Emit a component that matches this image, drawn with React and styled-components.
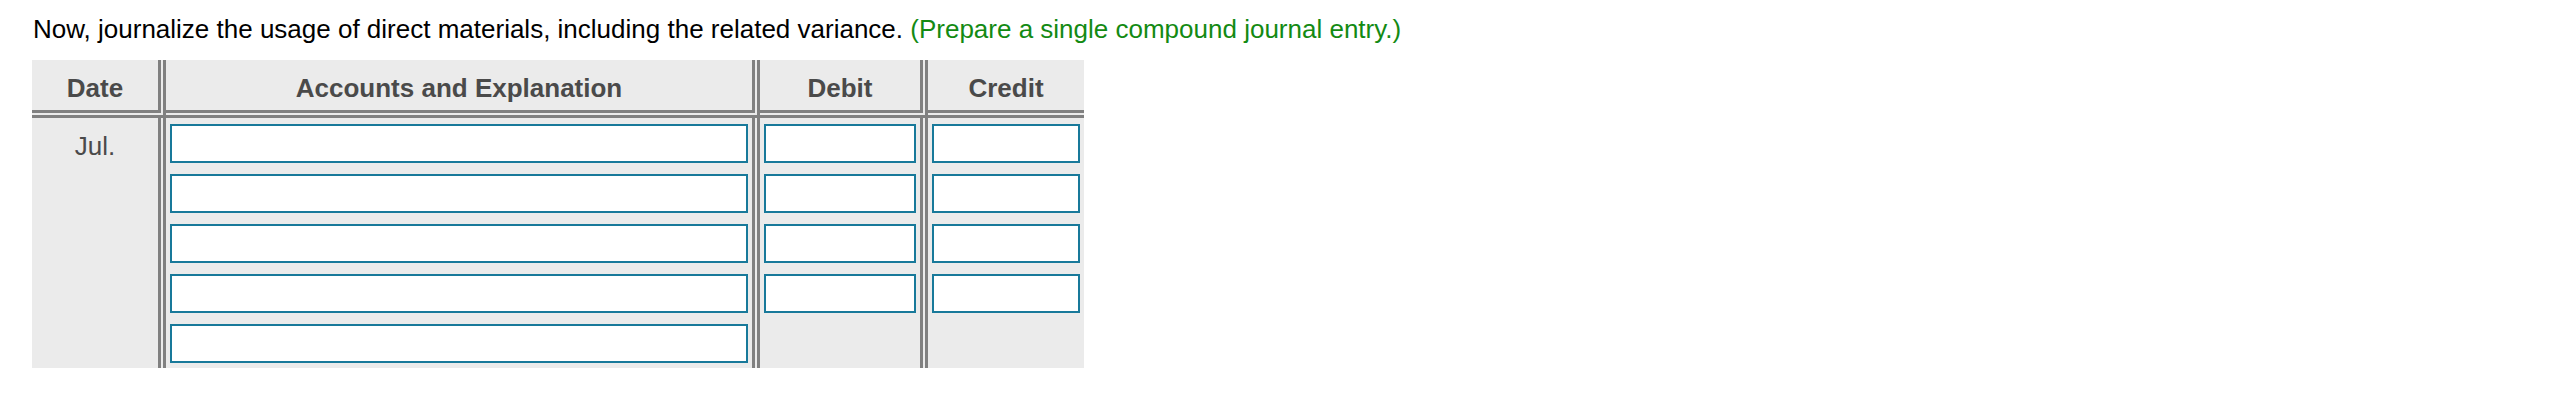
// Imports
import React from 'react';
import styled, { createGlobalStyle } from 'styled-components';

// Styles
const GlobalStyle = createGlobalStyle`
  html, body {
    margin: 0;
    padding: 0;
    background: #fff;
  }

  body {
    font-family: "Liberation Sans", Arial, Helvetica, sans-serif;
  }
`;

const Page = styled.div`
  padding: 14px 0 0 33px;
`;

const Intro = styled.p`
  margin: 0;
  font-size: 26px;
  line-height: 30px;
  color: #000;

  span {
    color: #138a13;
  }
`;

const Journal = styled.div`
  display: grid;
  grid-template-columns: 134px 594px 168px 156px;
  width: 1052px;
  margin: 16px 0 0 -1px;
  background: #ebebeb;
`;

const HeadCell = styled.div`
  height: 58px;
  padding-top: 13px;
  box-sizing: border-box;
  text-align: center;
  font-size: 26px;
  font-weight: bold;
  color: #4a4a4a;
  border-bottom: 8px double #808080;
  border-right: ${props => (props.last ? 'none' : '8px double #808080')};
`;

const BodyCell = styled.div`
  display: flex;
  flex-direction: column;
  gap: 11px;
  padding: 6px 4px 5px;
  height: 250px;
  box-sizing: border-box;
  border-right: ${props => (props.last ? 'none' : '8px double #808080')};
`;

const DateCell = styled.div`
  padding-top: 13px;
  height: 250px;
  box-sizing: border-box;
  text-align: center;
  font-size: 26px;
  color: #4a4a4a;
  border-right: 8px double #808080;
`;

const Field = styled.input`
  display: block;
  width: 100%;
  height: 39px;
  box-sizing: border-box;
  margin: 0;
  padding: 0 6px;
  border: 2px solid #18799a;
  border-radius: 0;
  background: #fff;
  font-family: inherit;
  font-size: 20px;
  outline: none;
`;

const headers = ['Date', 'Accounts and Explanation', 'Debit', 'Credit'];

// Main
const App = () => {
  const fieldColumn = count => Array.from({ length: count }, (_, i) => (
    <Field key={i} type="text" />
  ));

  return (
    <Page>
      <GlobalStyle />

      {/* Instructions */}
      <Intro>
        Now, journalize the usage of direct materials, including the related variance.{' '}
        <span>(Prepare a single compound journal entry.)</span>
      </Intro>

      {/* Journal table */}
      <Journal>
        {headers.map((h, i) => (
          <HeadCell key={h} last={i === headers.length - 1}>{h}</HeadCell>
        ))}
        <DateCell>Jul.</DateCell>
        <BodyCell>{fieldColumn(5)}</BodyCell>
        <BodyCell>{fieldColumn(4)}</BodyCell>
        <BodyCell last>{fieldColumn(4)}</BodyCell>
      </Journal>
    </Page>
  );
};

export default App;
